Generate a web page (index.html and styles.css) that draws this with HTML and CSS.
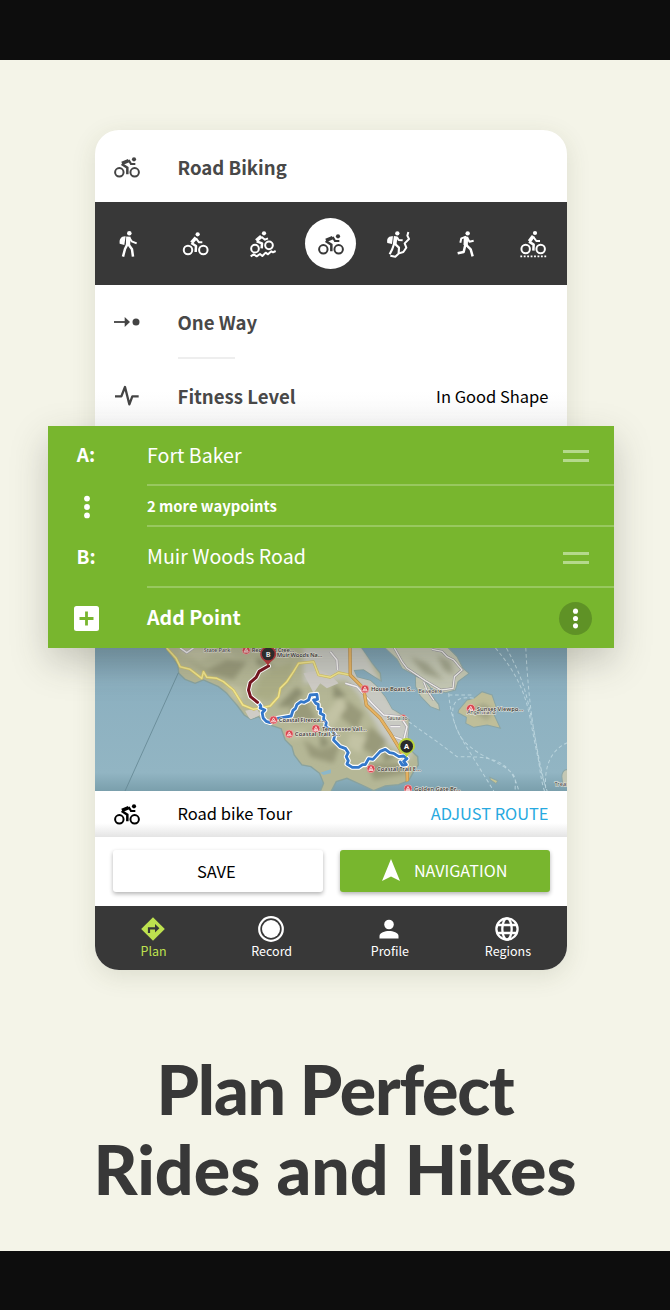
FILE: index.html
```
<!DOCTYPE html>
<html lang="en">
<head>
<meta charset="utf-8">
<title>Plan Perfect Rides and Hikes</title>
<link rel="stylesheet" href="styles.css">
</head>
<body>
<svg class="defs" aria-hidden="true">
  <symbol id="roadbike" viewBox="0 0 90 90">
    <g fill="none" stroke="currentColor" stroke-width="6">
      <circle cx="22" cy="61" r="12.7"/><circle cx="68" cy="61" r="12.7"/>
      <path d="M30 34 50 26" stroke-width="11"/>
      <path d="M29 36 46 47V67" stroke-width="7.5"/>
      <path d="M50 24 57 36H70" stroke-width="6.500"/>
    </g>
    <circle cx="66" cy="22" r="6.2" fill="currentColor"/>
  </symbol>
  <symbol id="more" viewBox="0 0 8 24"><g fill="currentColor"><circle cx="4" cy="3.6" r="2.9"/><circle cx="4" cy="12" r="2.9"/><circle cx="4" cy="20.4" r="2.9"/></g></symbol>
  <symbol id="poi" viewBox="-12 -12 24 24"><circle r="11" fill="#d9454e" stroke="#f3b7b6" stroke-width="2"/><path d="M-6 5 0-6 6 5ZM-2 4 0 0 2 4" fill="none" stroke="#fff" stroke-width="2"/></symbol>
</svg>
<main class="page">
  <div class="phone">
    <header class="row head">
      <svg class="ic"><use href="#roadbike"/></svg><span class="strong">Road Biking</span>
    </header>
    <nav class="sports">
      <svg viewBox="0 0 90 90"><circle cx="49" cy="13" r="6.8" fill="#fff"/><path d="M38 22C24 21 18 32 20 44L34 48Z" fill="#fff"/><g class="ln"><path d="M46 23 45 49" stroke-width="13"/><path d="M49 26 56 37 71 43" stroke-width="6"/><path d="M43 46 36 60 30 83M46 46 57 61 60 83" stroke-width="7.5"/></g></svg>
      <svg viewBox="0 0 90 90"><circle cx="50" cy="16" r="6.3" fill="#fff"/><g class="ln"><circle cx="21" cy="63" r="12.7"/><circle cx="67" cy="63" r="12.7"/><path d="M45 26 32 41" stroke-width="11"/><path d="M31 42 45 51 44 69" stroke-width="7.5"/><path d="M45 28 54 40H64"/></g></svg>
      <svg viewBox="0 0 90 90"><circle cx="48" cy="13" r="6.3" fill="#fff"/><g class="ln"><circle cx="21" cy="59" r="11.5"/><circle cx="63" cy="49" r="11.5"/><path d="M40 22 25 35" stroke-width="11"/><path d="M26 37 42 43 41 58" stroke-width="7.5"/><path d="M40 23 51 32 60 28M8 82 17 76 26 82 36 75 43 81 53 71 60 76 70 67 75 70 83 66"/></g></svg>
      <span class="active"><svg><use href="#roadbike"/></svg></span>
      <svg viewBox="0 0 90 90"><circle cx="43" cy="13" r="6.5" fill="#fff"/><path d="M30 22C16 20 10 30 13 42L27 45Z" fill="#fff"/><g class="ln"><path d="M38 22 35 46" stroke-width="11"/><path d="M42 25 47 33 59 34" /><path d="M33 45 28 60 20 76M35 44 48 56 47 72" stroke-width="6.5"/><path d="M76 9 73 20 78 30 65 43 70 56 61 69 48 73 37 83 22 80"/></g></svg>
      <svg viewBox="0 0 90 90"><circle cx="50" cy="13" r="6.6" fill="#fff"/><g class="ln"><path d="M45 23 44 48" stroke-width="13"/><path d="M46 23 31 28 28 41M49 26 55 38 68 35"/><path d="M43 47 38 69 20 73M44 46 59 61 65 82" stroke-width="7.5"/></g></svg>
      <svg viewBox="0 0 90 90"><circle cx="51" cy="12" r="6.3" fill="#fff"/><g class="ln"><circle cx="23" cy="60" r="12.7"/><circle cx="68" cy="60" r="12.7"/><path d="M46 21 34 37" stroke-width="11"/><path d="M33 38 47 47 46 65" stroke-width="7.5"/><path d="M46 24 55 36H66"/><path d="M7 82H85" stroke-width="5" stroke-dasharray="5.500 4.800"/></g></svg>
    </nav>
    <section class="opts">
      <div class="row one">
        <svg class="ic" viewBox="0 0 90 90"><path d="M38 30 54 45 38 60Z" fill="currentColor"/><path d="M6 45H44" stroke="currentColor" stroke-width="5.5"/><circle cx="72" cy="45" r="10.500" fill="currentColor"/></svg><span class="strong">One Way</span>
      </div>
      <div class="rule"></div>
      <div class="row fit">
        <svg class="ic" viewBox="0 0 90 90"><path d="M9 46H28L39 18 52 70 61 46H80" fill="none" stroke="currentColor" stroke-width="7" stroke-linejoin="round"/></svg><span class="strong">Fitness Level</span><span class="shape">In Good Shape</span>
      </div>
    </section>
    <section class="panel">
      <div class="way a"><b class="key">A:</b><div class="val"><span>Fort Baker</span><i class="grip"></i></div></div>
      <div class="way m"><span class="key"><svg class="dots"><use href="#more"/></svg></span><div class="val"><b>2 more waypoints</b></div></div>
      <div class="way b"><b class="key">B:</b><div class="val"><span>Muir Woods Road</span><i class="grip"></i></div></div>
      <div class="way add"><span class="key"><svg class="plus" viewBox="0 0 25 25"><rect width="25" height="25" rx="2.500" fill="#fff"/><path d="M12.5 5.5v14M5.5 12.5h14" stroke="#78b62e" stroke-width="2.8"/></svg></span><div class="val"><b>Add Point</b><span class="menu"><svg><use href="#more"/></svg></span></div></div>
    </section>
    <svg class="map" viewBox="15 24 1416 429" preserveAspectRatio="none">
      <defs>
        <linearGradient id="sea" x2="0" y2="1"><stop offset="0" stop-color="#7a9fb1"/><stop offset=".25" stop-color="#8cb0c0"/><stop offset=".87" stop-color="#92b5c3"/><stop offset="1" stop-color="#7a9fac"/></linearGradient>
        <path id="land" d="M222 20 245 50 263 75 266 100 285 118 315 130 340 120 385 140 410 160 440 195 462 225 482 238 505 230 530 252 573 266 585 300 605 320 612 345 635 375 662 380 688 400 700 430 690 455H722L738 425 770 415 815 435 850 452 885 438 925 434 955 422 970 395 984 375 982 350 960 330 952 290 957 240 930 222 905 208 885 172 860 140 840 122 800 112 790 90 820 88 872 122 870 100 845 70 810 20Z"/>
        <clipPath id="landclip"><use href="#land"/></clipPath>
        <filter id="soft"><feGaussianBlur stdDeviation="8"/></filter>
      </defs>
      <path d="M15 24H1431V453H15Z" fill="url(#sea)"/>
      <use href="#land" fill="#b5b796" stroke="#89a29e" stroke-width="4"/>
      <g clip-path="url(#landclip)">
        <g filter="url(#soft)">
          <path d="M640 20H820L890 170 970 280 960 360 890 310 810 170 770 120 640 130Z" fill="#c9cac3"/>
          <path d="M510 115C560 70 590 80 610 60L600 125 540 185 490 170Z" fill="#acae87"/>
          <path d="M290 60 350 90 410 60 470 65 430 120 350 100ZM600 200 650 180 680 240 610 245ZM640 300 690 330 750 310 730 370 660 350ZM770 180 820 220 800 270 750 230ZM840 260 890 300 860 350 810 320ZM830 370 940 370 950 400 850 420Z" fill="#999a7a"/>
          <path d="M270 40 330 60 380 40 440 55 400 25 270 24ZM410 130 460 150 450 190 420 165ZM590 270 650 270 640 290 600 300ZM700 230 750 170 770 200 720 270ZM780 280 830 290 810 340 770 320Z" fill="#c3c3a4"/>
          <path d="M500 50 560 85 500 75ZM560 200 620 140 640 160 600 200ZM690 280 720 310 690 325ZM730 130 770 170 730 175ZM880 330 920 350 880 365Z" fill="#8e9072"/>
        </g>
        <path d="M640 100 690 90 720 105 745 130 710 145 690 130 670 160 655 130ZM465 212 500 205 510 225 480 240Z" fill="#cfccc6"/>
        <path d="M690 398 722 388V400L700 405Z" fill="#8cb7c9"/>
        <g fill="none" stroke-linejoin="round">
          <path d="M270 24 290 38 310 24M720 35 740 60 742 90M765 130 800 140 845 190 880 225 930 230 950 260 940 300 910 290M900 260 930 260" stroke="#a7a3aa" stroke-width="8"/>
          <path d="M270 24 290 38 310 24M720 35 740 60 742 90M765 130 800 140 845 190 880 225 930 230 950 260 940 300 910 290M900 260 930 260" stroke="#f3f1f0" stroke-width="4.5"/>
          <path d="M230 24 258 55 270 80 300 88 335 115 340 95 350 112 380 115 400 125 430 150 458 195 490 208 540 198 565 170 570 145 590 125 610 95 625 70 670 65 685 105 720 112 745 98 780 105" stroke="#d0c062" stroke-width="8"/>
          <path d="M230 24 258 55 270 80 300 88 335 115 340 95 350 112 380 115 400 125 430 150 458 195 490 208 540 198 565 170 570 145 590 125 610 95 625 70 670 65 685 105 720 112 745 98 780 105" stroke="#f0e48e" stroke-width="4.500"/>
          <path d="M779 20 780 105 820 145 828 195 870 235 900 280 930 330 950 380 952 455" stroke="#b88b42" stroke-width="10"/>
          <path d="M779 20 780 105 820 145 828 195 870 235 900 280 930 330 950 380 952 455" stroke="#e6b363" stroke-width="6.500"/>
        </g>
      </g>
      <g fill="#c4c7b3" stroke="#8aa5a6" stroke-width="3">
        <path d="M880 20 920 58 935 85 990 115 1020 145 1065 158 1095 150 1103 125 1136 100 1118 85 1100 50 1070 20Z"/>
        <path d="M975 108 1000 118 1020 142 1022 165 1045 193 1048 211 1020 200 990 168 976 140Z"/>
        <path d="M1105 210 1130 180 1150 175 1175 155 1205 165 1217 200 1210 222 1230 265 1190 255 1150 262 1126 250 1128 232 1103 218Z" fill="#bfbe99"/>
        <path d="M1431 388C1412 390 1410 410 1420 440H1431Z"/>
        <path d="M1198 412 1222 422 1217 431 1200 420Z" fill="#c9c795"/>
      </g>
      <g filter="url(#soft)" fill="#93957b" opacity=".7"><path d="M960 50 1010 70 1060 120 1000 100ZM1140 210 1180 190 1210 210 1190 240ZM1040 45 1080 65 1090 105 1060 90Z"/></g>
      <path d="M910 20 935 65 950 85 1005 122 1052 150 1088 145 1092 110 1115 90 1090 60 1070 50 1055 34 1025 28M1000 125 1010 150 1030 180" fill="none" stroke="#8f8d96" stroke-width="7"/>
      <path d="M910 20 935 65 950 85 1005 122 1052 150 1088 145 1092 110 1115 90 1090 60 1070 50 1055 34 1025 28M1000 125 1010 150 1030 180" fill="none" stroke="#eeece9" stroke-width="4"/>
      <path d="M265 98 105 453" stroke="#658894" stroke-width="2.5"/>
      <g fill="none" stroke="#b9d3dc" stroke-width="3" stroke-dasharray="11 8">
        <path d="M1215 24C1280 100 1305 160 1320 240S1350 400 1370 453M1248 24C1300 120 1308 160 1328 260S1345 400 1362 453M1306 24C1310 110 1320 220 1335 300S1355 400 1362 430"/>
        <path d="M955 245 1040 305 1100 350C1190 350 1260 350 1285 453M1075 160C1080 240 1110 290 1125 315S1190 420 1210 453M1150 175C1070 160 1080 230 1105 280S1190 350 1240 380 1270 430 1275 453M1075 165H1150M1431 308C1380 330 1360 380 1366 450"/>
      </g>
      <g fill="none" stroke-linejoin="round" stroke-linecap="round">
        <path d="M504 188 512 198 510 204 524 210 516 218 519 234 528 244 540 248 556 236 580 232 603 228 608 212 616 205 620 194 632 185 642 187 655 180 660 165 680 163 682 178 670 180 677 190 684 193 684 206 692 208 690 220 701 226 700 238 708 248 706 260 722 270 734 285 730 300 742 312 750 320 766 326 774 338 768 350 774 362 770 372 786 382 805 382 817 374 825 374 835 356 848 358 870 334 885 328 898 338 910 340 926 350 940 348 950 356 940 364 948 374 936 376 930 366" stroke="#fff" stroke-width="15"/>
        <path d="M504 188 512 198 510 204 524 210 516 218 519 234 528 244 540 248 556 236 580 232 603 228 608 212 616 205 620 194 632 185 642 187 655 180 660 165 680 163 682 178 670 180 677 190 684 193 684 206 692 208 690 220 701 226 700 238 708 248 706 260 722 270 734 285 730 300 742 312 750 320 766 326 774 338 768 350 774 362 770 372 786 382 805 382 817 374 825 374 835 356 848 358 870 334 885 328 898 338 910 340 926 350 940 348 950 356 940 364 948 374 936 376 930 366" stroke="#3478ca" stroke-width="8.500"/>
        <path d="M535 78 507 94 498 112 480 128 475 150 481 170 502 187" stroke="#fff" stroke-width="15"/>
        <path d="M535 78 507 94 498 112 480 128 475 150 481 170 502 187" stroke="#76141f" stroke-width="9"/>
      </g>
      <g>
        <use href="#poi" x="455" y="18" width="26" height="26"/><use href="#poi" x="537" y="227" width="26" height="26"/><use href="#poi" x="584" y="269" width="26" height="26"/><use href="#poi" x="664" y="253" width="26" height="26"/><use href="#poi" x="811" y="134" width="26" height="26"/><use href="#poi" x="928" y="223" width="20" height="20"/><use href="#poi" x="1127" y="192" width="28" height="28"/><use href="#poi" x="829" y="373" width="26" height="26"/><use href="#poi" x="940" y="433" width="26" height="26"/>
      </g>
      <g class="lbl">
        <text x="341" y="36" class="dim" textLength="80">State Park</text><text x="485" y="36" textLength="128">Redwood Cree…</text><text x="560" y="50" textLength="137">Muir Woods Na…</text>
        <text x="566" y="245" textLength="138">Coastal Fireroa…</text><text x="614" y="288" textLength="136">Coastal Trail 3…</text><text x="695" y="273" textLength="135">Tennessee Vall…</text>
        <text x="842" y="153" textLength="132">House Boats S…</text><text x="984" y="160" textLength="72" class="dim">Belvedere</text><text x="890" y="239" textLength="62" class="dim">Sausalito</text>
        <text x="1130" y="223" textLength="86" class="dim">Angel Island</text><text x="1159" y="213" textLength="140">Sunset Viewpo…</text>
        <text x="860" y="392" textLength="132">Coastal Trail E…</text><text x="971" y="452" textLength="139">Golden Gate Br…</text><text x="1392" y="439" class="dim">Treasure</text>
      </g>
      <path d="M533 79C530 65 510 59 510 42A24 24 0 0 1 558 42C558 59 536 65 533 79Z" fill="#b7353c"/><circle cx="534" cy="42" r="19" fill="#29292a"/><text class="pin" x="534" y="50">B</text>
      <path d="M949 353C946 340 924 336 924 319A25 25 0 0 1 974 319C974 336 952 340 949 353Z" fill="#b9d33c"/><circle cx="949" cy="319" r="19" fill="#29292a"/><text class="pin" x="949" y="327">A</text>
    </svg>
    <div class="row tour"><svg class="ic"><use href="#roadbike"/></svg><span>Road bike Tour</span><a class="adjust">ADJUST ROUTE</a></div>
    <div class="actions">
      <button class="btn save">SAVE</button>
      <button class="btn go"><svg viewBox="0 0 18 22"><path d="M9 0 18 22 9 17.5 0 22Z" fill="#fff"/></svg>NAVIGATION</button>
    </div>
    <nav class="tabs">
      <div class="tab on"><svg viewBox="0 0 26 26"><path d="M13 1.2 24.8 13 13 24.8 1.2 13Z" fill="#bde14f"/><path d="M9 17V12.3H16" fill="none" stroke="#383838" stroke-width="2.2"/><path d="M15 8 19.4 12.3 15 16.6Z" fill="#383838"/></svg><span>Plan</span></div>
      <div class="tab"><svg viewBox="0 0 26 26"><circle cx="13" cy="13" r="11.8" fill="none" stroke="#fff" stroke-width="2.2"/><circle cx="13" cy="13" r="9" fill="#fff"/></svg><span>Record</span></div>
      <div class="tab"><svg viewBox="0 0 26 26"><circle cx="13" cy="8.5" r="4.8" fill="#fff"/><path d="M3.5 22.5V20C3.5 16.800 9 15 13 15S22.500 16.800 22.500 20V22.500Z" fill="#fff"/></svg><span>Profile</span></div>
      <div class="tab"><svg viewBox="0 0 26 26"><g fill="none" stroke="#fff" stroke-width="2.3"><circle cx="13" cy="13" r="10.600"/><ellipse cx="13" cy="13" rx="4.700" ry="10.600"/><path d="M3.500 9H22.500M3.500 17H22.500"/></g></svg><span>Regions</span></div>
    </nav>
  </div>
  <h1 class="title"><span class="l1">Plan Perfect</span><span class="l2">Rides and Hikes</span></h1>
</main>
</body>
</html>
```
FILE: styles.css
```
* { box-sizing: border-box; }
body { margin: 0; background: #f4f4e8; font-family: "Noto Sans CJK SC", "Noto Sans", sans-serif; color: #000; }
.defs { position: absolute; width: 0; height: 0; }
.page { height: 1310px; border-top: 60px solid #0d0d0d; border-bottom: 59px solid #0d0d0d; padding-top: 70px; overflow: hidden; }
.phone { width: 472.5px; height: 840px; margin-left: 94.5px; border-radius: 24px; background: #fff; box-shadow: 0 6px 24px rgba(70, 75, 40, .13); }
.row { display: flex; align-items: center; padding: 0 18.5px 0 17px; font-size: 16.5px; line-height: 24px; }
.ic { width: 30px; height: 30px; margin-right: 36px; flex: none; color: #444; }
.strong { font-weight: 700; font-size: 18.6px; color: #484848; }
.head { height: 72px; padding-top: 1px; }
.sports { height: 83px; background: #383838; display: grid; grid-template-columns: repeat(7, 1fr); place-items: center; }
.sports svg { width: 30px; height: 30px; display: block; }
.ln { fill: none; stroke: #fff; stroke-width: 6; stroke-linejoin: round; }
.active { width: 51px; height: 51px; border-radius: 50%; background: #fff; color: #383838; display: grid; place-items: center; }
.opts { height: 140.5px; background: linear-gradient(#fff 75%, #f8f8f8); }
.one { height: 72px; padding-top: 2px; }
.rule { width: 57px; height: 2px; margin-left: 83px; background: #eee; }
.fit { height: 66px; padding-top: 7px; }
.shape { margin-left: auto; }
.panel { position: relative; width: 565.5px; height: 222.5px; margin-left: -46.5px; background: #78b62e; color: #fff; box-shadow: 0 14px 34px rgba(60, 60, 50, .25); font-size: 19.6px; line-height: 28px; }
.way { display: flex; }
.key { width: 99px; padding-right: 23px; display: flex; align-items: center; justify-content: center; font-size: 19px; }
b.key { padding-bottom: 3px; }
.val { flex: 1; display: flex; align-items: center; justify-content: space-between; padding-right: 25px; border-bottom: 2px solid #98c85f; }
.a, .b { height: 60.5px; }
.m { height: 41px; }
.m .key { padding-right: 22px; }
.m .val { font-size: 14.8px; }
.add { height: 60.5px; }
.add .val { border: 0; padding-right: 21.5px; }
.add b { padding-bottom: 2px; }
.grip { width: 26px; height: 12px; margin-top: 3px; border: solid #b5d98c; border-width: 3px 0; }
.dots { width: 8px; height: 24px; }
.plus { width: 25px; height: 25px; margin-top: 1px; }
.menu { width: 33px; height: 33px; margin-top: 1px; border-radius: 50%; background: #5f9226; display: grid; place-items: center; }
.menu svg { width: 7px; height: 21px; }
.map { display: block; width: 472.5px; height: 143px; }
.lbl text { font: 600 18px "Noto Sans", sans-serif; fill: #3b3839; stroke: #eceae0; stroke-width: 3px; paint-order: stroke; }
.lbl .dim { font-weight: 500; font-size: 17px; fill: #4c4b4f; }
.pin { font: 700 22px "Noto Sans", sans-serif; fill: #fff; text-anchor: middle; }
.tour { height: 46px; padding-bottom: 3px; background: linear-gradient(#fff 70%, #e4e4e4); }
.tour .ic { color: #000; margin-top: 2px; }
.adjust { margin-left: auto; color: #27a9e0; font-size: 16.4px; }
.actions { height: 69px; display: grid; grid-template-columns: 1fr 1fr; gap: 17px; padding: 13px 17.5px 13px 18.5px; }
.btn { height: 42px; border: 0; padding: 0 0 2px; border-radius: 3px; background: #fff; color: #000; font: 16.5px/24px "Noto Sans CJK SC", sans-serif; box-shadow: 0 2px 4px rgba(0, 0, 0, .3); display: flex; align-items: center; justify-content: center; }
.save { padding: 0 3px 0 0; }
.go { background: #78b62e; color: #fff; font-size: 16.2px; gap: 14px; }
.go svg { width: 18px; height: 22px; }
.tabs { height: 64px; background: #383838; border-radius: 0 0 24px 24px; display: grid; grid-template-columns: repeat(4, 1fr); color: #fff; font-size: 12.5px; line-height: 18px; }
.tab { display: flex; flex-direction: column; align-items: center; padding-top: 10px; }
.tab svg { width: 26px; height: 26px; margin-left: -1px; }
.on { color: #bde14f; }
.title { margin: 79px 0 0; font: 900 68px/80px Lato, sans-serif; color: #383838; text-align: center; }
.title span { display: block; white-space: nowrap; }
.l1 { letter-spacing: -1.2px; }
```
